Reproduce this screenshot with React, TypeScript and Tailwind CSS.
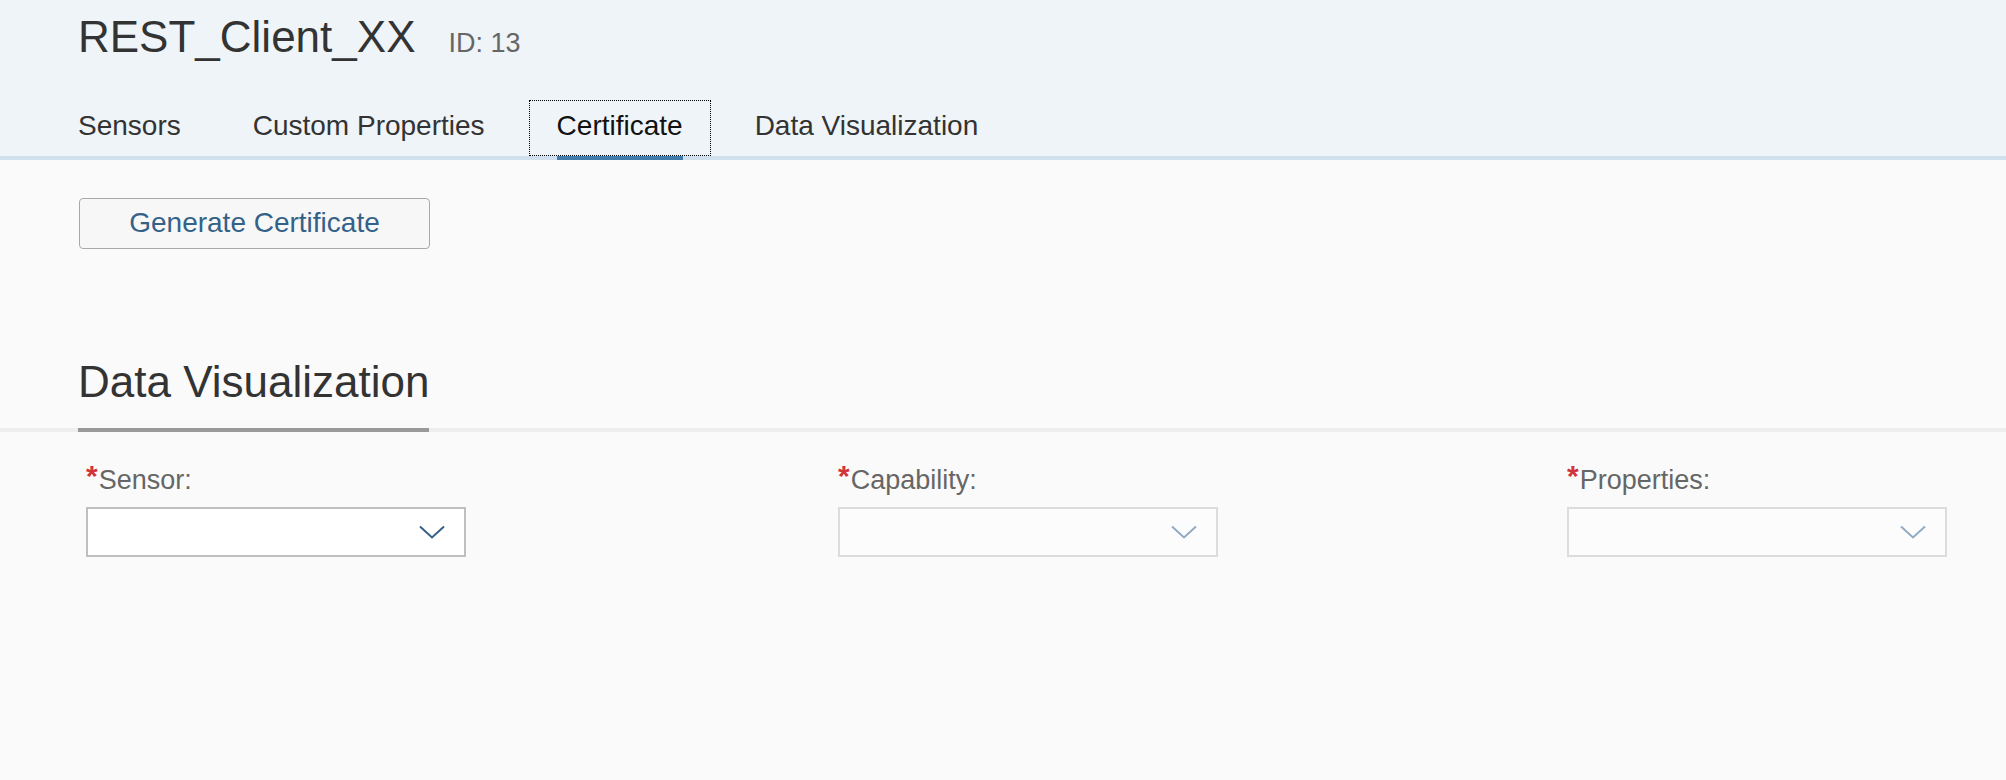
import React from "react";

const tabs = ["Sensors", "Custom Properties", "Certificate", "Data Visualization"];

const Chevron = ({ color }: { color: string }) => (
  <svg width="26" height="14" viewBox="0 0 26 14" fill="none">
    <polyline points="1,1.5 13,12.5 25,1.5" stroke={color} strokeWidth="2" />
  </svg>
);

const Field = ({ label, disabled }: { label: string; disabled?: boolean }) => (
  <div className="flex flex-col">
    <div className="flex h-[32px] items-center text-[27px] leading-[32px] text-[#666]">
      <span className="-mt-[8px] mr-[1px] text-[30px] font-bold leading-none text-[#d0353a]">*</span>
      <span>{label}</span>
    </div>
    <div
      className={
        disabled
          ? "mt-[11px] flex h-[50px] w-[380px] items-center justify-end border-2 border-[#dcdcdc] bg-[#fcfcfc] pr-[19px]"
          : "mt-[11px] flex h-[50px] w-[380px] items-center justify-end border-2 border-[#bfbfbf] bg-white pr-[19px]"
      }
    >
      <Chevron color={disabled ? "#91abc4" : "#346187"} />
    </div>
  </div>
);

export default function App() {
  return (
    <div className="min-h-[780px] bg-[#fafafa] font-['Liberation_Sans',Arial,sans-serif]">
      {/* object header */}
      <div className="border-b-4 border-[#d1e0ee] bg-[#eff4f9] px-[78px] pt-[15px]">
        <div className="flex items-baseline gap-[33px]">
          <h1 className="text-[44px] leading-[44px] text-[#333]">REST_Client_XX</h1>
          <span className="text-[27px] text-[#666]">ID: 13</span>
        </div>
        <div className="-ml-[28px] mt-[36px] flex gap-4">
          {tabs.map((t) => {
            const active = t === "Certificate";
            return (
              <div
                key={t}
                className={
                  active
                    ? "relative flex h-[56px] items-center border border-dotted border-black px-[27px] pb-[3px] text-[28px] text-[#111]"
                    : "relative flex h-[56px] items-center border border-transparent px-[27px] pb-[3px] text-[28px] text-[#333]"
                }
              >
                {t}
                {active && (
                  <span className="absolute -bottom-[5px] left-[27px] right-[27px] h-1 bg-[#427cac]" />
                )}
              </div>
            );
          })}
        </div>
      </div>

      {/* certificate */}
      <div className="px-[79px] pt-[38px]">
        <button className="h-[51px] w-[351px] rounded-[4px] border border-[#a8a8a8] bg-[#f7f7f7] text-[28px] text-[#346187]">
          Generate Certificate
        </button>
      </div>

      {/* data visualization */}
      <div className="mt-[109px] border-b-4 border-[#eeeeee] px-[78px]">
        <div className="-mb-1 inline-block border-b-4 border-[#999] pb-[22px]">
          <h2 className="text-[44px] leading-[48px] text-[#333]">Data Visualization</h2>
        </div>
      </div>

      <div className="grid grid-cols-[752px_729px_1fr] pl-[86px] pt-[32px]">
        <Field label="Sensor:" />
        <Field label="Capability:" disabled />
        <Field label="Properties:" disabled />
      </div>
    </div>
  );
}
